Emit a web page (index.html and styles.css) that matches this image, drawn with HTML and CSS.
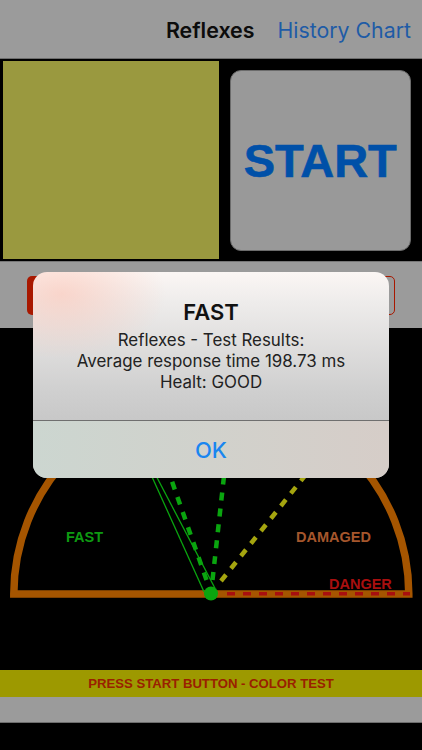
FILE: index.html
```html
<!DOCTYPE html>
<html lang="en">
<head>
<meta charset="utf-8">
<title>Reflexes</title>
<link rel="stylesheet" href="styles.css">
</head>
<body>
<div class="screen">
  <header class="nav">
    <span class="nav-title">Reflexes</span>
    <span class="nav-link">History Chart</span>
  </header>
  <section class="test-row">
    <div class="color-box"></div>
    <div class="start-wrap"><button class="start">START</button></div>
  </section>
  <section class="button-band">
    <div class="band-btn band-btn-on"></div>
    <div class="band-btn band-btn-off"></div>
  </section>
  <section class="gauge-area">
    <svg class="gauge" viewBox="0 0 422 342" width="422" height="342">
      <path class="arc" d="M13.8 266 A197.500 197.500 0 0 1 408.800 266 Z"/>
      <line class="base-red" x1="227" y1="265.700" x2="410" y2="265.700"/>
      <line class="dash-green" x1="206.500" y1="252" x2="168" y2="142"/>
      <line class="dash-green" x1="212.500" y1="252" x2="226" y2="130"/>
      <line class="dash-yellow" x1="221" y1="253" x2="312" y2="139"/>
      <line class="needle" x1="204" y1="263.700" x2="148" y2="140"/>
      <line class="needle" x1="215" y1="260.300" x2="152" y2="140"/>
      <circle class="hub" cx="211" cy="265.500" r="7"/>
      <text class="lbl lbl-fast" x="66" y="214">FAST</text>
      <text class="lbl lbl-damaged" x="296" y="214">DAMAGED</text>
      <text class="lbl lbl-danger" x="329" y="261">DANGER</text>
    </svg>
  </section>
  <div class="status">PRESS START BUTTON - COLOR TEST</div>
  <div class="gray-strip"></div>
  <div class="bottom"></div>

  <div class="alert">
    <div class="alert-body">
      <h1 class="alert-title">FAST</h1>
      <p class="alert-msg">Reflexes - Test Results:<br>Average response time 198.73 ms<br>Healt: GOOD</p>
    </div>
    <div class="alert-action">OK</div>
  </div>
</div>
</body>
</html>
```
FILE: styles.css
```css
* { box-sizing: border-box; }
html, body { margin: 0; padding: 0; background: #000; }
.screen { position: relative; width: 422px; height: 750px; overflow: hidden; display: flex; flex-direction: column; background: #000; font-family: "Liberation Sans", Arial, sans-serif; }

.nav { height: 59px; flex: none; background: #9b9b9b; border-bottom: 1px solid #6d6d6d; display: flex; align-items: center; justify-content: flex-end; gap: 23px; padding: 1px 11px 0 0; font-family: Inter, "Liberation Sans", sans-serif; font-size: 21.300px; }
.nav-title { color: #0c0c0c; font-weight: 600; font-size: 21.400px; }
.nav-link { color: #1f5ba6; }

.test-row { height: 202px; flex: none; display: flex; padding: 2px 0 2px 3px; background: #000; }
.color-box { width: 216px; height: 198px; background: #9a993f; }
.start-wrap { flex: 1; padding: 8.500px 0 0 11px; }
.start { display: block; width: 180.500px; height: 181px; padding: 0; border: 1px solid #6b6b6b; border-radius: 11px; background: #999; color: #0050a8; font-family: "Liberation Sans", Arial, sans-serif; font-weight: 700; font-size: 47px; -webkit-text-stroke: 0.6px #0050a8; }

.button-band { height: 67px; flex: none; background: #9b9b9b; border-top: 1px solid #777; display: flex; justify-content: space-between; padding: 14px 27px 0; }
.band-btn { width: 30px; height: 39px; border-radius: 5px; }
.band-btn-on { background: #a81800; }
.band-btn-off { border: 1px solid #a81800; }

.gauge-area { height: 342px; flex: none; background: #000; }
.gauge { display: block; }
.arc { fill: none; stroke: #a55500; stroke-width: 7.500; stroke-linejoin: miter; }
.base-red { stroke: #a80f0f; stroke-width: 3.500; stroke-dasharray: 8 8; }
.dash-green { stroke: #0aa50f; stroke-width: 4.500; stroke-dasharray: 8 8; }
.dash-yellow { stroke: #a5a50f; stroke-width: 4.500; stroke-dasharray: 8 8; }
.needle { stroke: #0aa50f; stroke-width: 1.300; }
.hub { fill: #0aa50f; }
.lbl { font-family: "Liberation Sans", Arial, sans-serif; font-weight: 700; font-size: 14.500px; }
.lbl-fast { fill: #0e9a12; }
.lbl-damaged { fill: #a5562c; }
.lbl-danger { fill: #a80f0f; }

.status { height: 27px; flex: none; background: #9d9900; color: #9a2000; font-size: 13.150px; font-weight: 700; display: flex; align-items: center; justify-content: center; }
.gray-strip { height: 26px; flex: none; background: #9b9b9b; border-bottom: 1px solid #6d6d6d; }
.bottom { flex: 1; background: #000; }

.alert { position: absolute; left: 33px; top: 272px; width: 356px; height: 206px; border-radius: 14px; overflow: hidden; display: flex; flex-direction: column; font-family: Inter, "Liberation Sans", sans-serif;
  background:
    radial-gradient(ellipse 105px 65px at 28px 22px, rgba(255,192,175,.55), rgba(255,200,190,0) 100%),
    linear-gradient(180deg, #fbf6f4 0, #eeeceb 30px, #cfcfcf 120px, #c8c8c8 148px); }
.alert-body { height: 149px; flex: none; border-bottom: 1px solid #6f6f6f; text-align: center; padding-top: 25px; }
.alert-title { margin: 0; font-size: 22px; font-weight: 600; line-height: 30px; color: #111; }
.alert-msg { margin: 3px 0 0; font-size: 16.900px; line-height: 21px; color: #222; }
.alert-action { flex: 1; display: flex; align-items: center; justify-content: center; background: linear-gradient(90deg, #ccd6d0, #d6cdc8); color: #1a86f0; font-size: 22px; font-weight: 500; }
```
